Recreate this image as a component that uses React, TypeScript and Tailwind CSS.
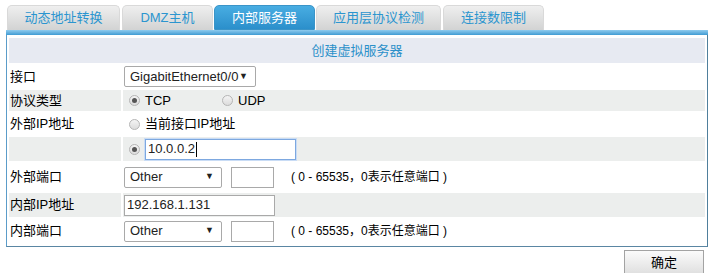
import React from "react";

const tabs = [
    {name: "动态地址转换", w: "w-[113px]", ml: "ml-[7px]"},
    {name: "DMZ主机", w: "w-[91px]", ml: "ml-[2px]"},
    {name: "内部服务器", w: "w-[101px]", ml: "ml-[1px]", active: true},
    {name: "应用层协议检测", w: "w-[125px]", ml: "ml-[1px]"},
    {name: "连接数限制", w: "w-[101px]", ml: "ml-[2px]"},
];

function Radio({checked}: {checked?: boolean}) {
    return (
        <span className="w-[11px] h-[11px] rounded-full border border-[#b5b5b5] bg-gradient-to-b from-[#f4f4f4] to-[#dcdcdc] flex items-center justify-center shrink-0">
            {checked && <span className="w-[5px] h-[5px] rounded-full bg-[#555]"></span>}
        </span>
    );
}

function Select({text, w}: {text: string; w: string}) {
    return (
        <div className={`${w} h-[21px] border border-[#a9a9a9] rounded-[2px] bg-white flex items-center justify-between pl-[5px] pr-[7px] text-[13px] text-[#222]`}>
            <span>{text}</span>
            <span className="text-[9px] text-[#222]">▼</span>
        </div>
    );
}

function Box({w, children, focus}: {w: string; children?: React.ReactNode; focus?: boolean}) {
    return (
        <div className={`${w} h-[21px] bg-white flex items-center pl-[2px] text-[13px] text-[#222] ${focus ? "border border-[#7da8e0] shadow-[0_0_0_1px_#c9dcf5]" : "border border-[#a9a9a9]"}`}>
            {children}
        </div>
    );
}

function Row({label, h, shaded, children}: {label: string; h: string; shaded?: boolean; children?: React.ReactNode}) {
    const bg = shaded ? "bg-[#eceeed]" : "bg-white";
    return (
        <div className={`grid grid-cols-[112px_1fr] gap-x-[2px] ${h}`}>
            <div className={`${bg} flex items-center pl-[1px] text-[13px] text-black`}>{label}</div>
            <div className={`${bg} flex items-center pl-[1px]`}>{children}</div>
        </div>
    );
}

function PortHint() {
    return <span className="ml-[17px] text-[12px] text-black">(&nbsp;0 - 65535，0表示任意端口 )</span>;
}

export default function App() {
    return (
        <div className="w-[714px] h-[273px] bg-white overflow-hidden font-['Liberation_Sans','Noto_Sans_CJK_SC',sans-serif]">
            {/* tabs */}
            <div className="flex items-end pt-[5px] h-[30px]">
                {tabs.map(t => (
                    <div key={t.name}
                         className={`${t.w} ${t.ml} h-[25px] rounded-t-[5px] flex items-center justify-center text-[13px] ${t.active
                             ? "bg-gradient-to-b from-[#48ade2] to-[#2b8fcb] text-white border border-[#3a94c8]"
                             : "bg-gradient-to-b from-[#efefef] to-[#d2d3d3] text-[#2b95cf] border border-[#d9d9d9] border-b-0"}`}>
                        {t.name}
                    </div>
                ))}
            </div>
            <div className="ml-[6px] w-[702px] h-[5px] bg-gradient-to-b from-[#8fcbee] to-[#3d9bd3]"></div>

            {/* panel */}
            <div className="ml-[6px] w-[702px] border-l border-l-[#5b9cc9] border-r border-r-[#4f7f9c] border-b border-b-[#5a86a3] px-[2px] pt-[3px] pb-[1px]">
                <div className="h-[25px] bg-[#e7eaf2] flex items-center justify-center text-[13px] text-[#2b90c9]">
                    创建虚拟服务器
                </div>
                <Row label="接口" h="h-[27px]">
                    <Select text="GigabitEthernet0/0" w="w-[132px]"/>
                </Row>
                <Row label="协议类型" h="h-[21px]" shaded>
                    <div className="flex items-center ml-[5px] text-[13px] text-black">
                        <Radio checked/>
                        <span className="ml-[5px] w-[77px]">TCP</span>
                        <Radio/>
                        <span className="ml-[5px]">UDP</span>
                    </div>
                </Row>
                <Row label="外部IP地址" h="h-[26px]">
                    <div className="flex items-center ml-[5px] text-[13px] text-black">
                        <Radio/>
                        <span className="ml-[5px]">当前接口IP地址</span>
                    </div>
                </Row>
                <Row label="" h="h-[24px]" shaded>
                    <div className="flex items-center ml-[5px]">
                        <Radio checked/>
                        <div className="ml-[5px]">
                            <Box w="w-[151px]" focus>10.0.0.2<span className="w-[1px] h-[15px] bg-black ml-[1px]"></span></Box>
                        </div>
                    </div>
                </Row>
                <Row label="外部端口" h="h-[32px]">
                    <Select text="Other" w="w-[98px]"/>
                    <div className="ml-[9px]"><Box w="w-[43px]"/></div>
                    <PortHint/>
                </Row>
                <Row label="内部IP地址" h="h-[24px]" shaded>
                    <Box w="w-[151px]">192.168.1.131</Box>
                </Row>
                <Row label="内部端口" h="h-[28px]">
                    <Select text="Other" w="w-[98px]"/>
                    <div className="ml-[9px]"><Box w="w-[43px]"/></div>
                    <PortHint/>
                </Row>
            </div>

            <div className="flex justify-end pr-[10px] pt-[3px]">
                <button className="w-[80px] h-[26px] border border-[#a3a3a3] bg-gradient-to-b from-[#fbfbfb] to-[#dedede] text-[13px] text-black">
                    确定
                </button>
            </div>
        </div>
    );
}
